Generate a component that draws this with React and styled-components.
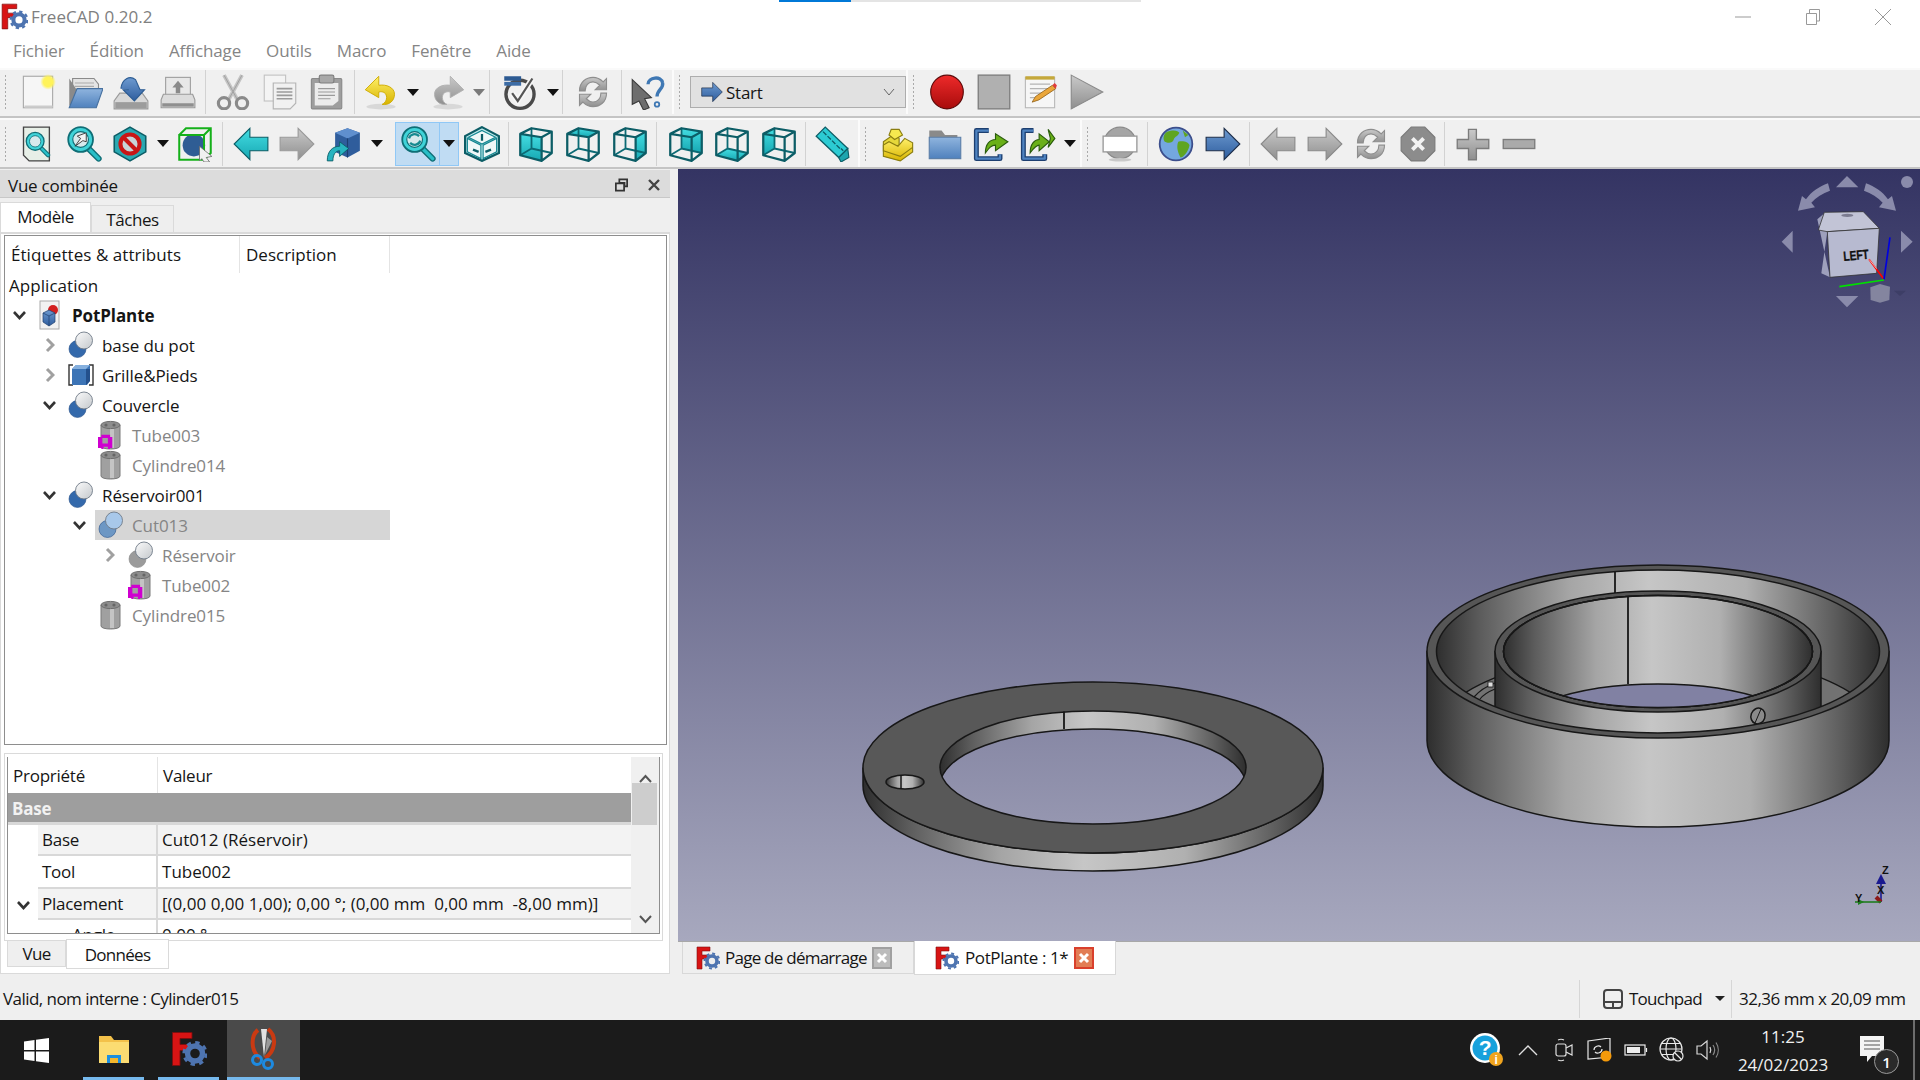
import React from 'react';
import styled, { createGlobalStyle } from 'styled-components';

const GlobalStyle = createGlobalStyle`
    html, body {
        margin: 0;
        padding: 0;
        background: #efefef;
    }
    * {
        box-sizing: border-box;
    }
`;

const FONT = `"Open Sans", "Noto Sans", "Liberation Sans", sans-serif`;

const Page = styled.div`
    width: 1920px;
    height: 1080px;
    overflow: hidden;
    display: flex;
    flex-direction: column;
    font-family: ${FONT};
    font-size: 17px;
    letter-spacing: -0.25px;
    color: #151515;
    background: #efefef;
`;

const TitleBar = styled.div`
    position: relative;
    height: 33px;
    flex: none;
    background: #fff;
    display: flex;
    align-items: center;
    padding-left: 1px;
    color: #808080;
`;

const TitleText = styled.span`
    margin-left: 3px;
    letter-spacing: 0.05px;
`;

const LoadBar = styled.div`
    position: absolute;
    top: 0;
    left: 779px;
    width: 362px;
    height: 2px;
    background: linear-gradient(90deg, #0078d7 0 72px, #e4e4e4 72px);
`;

const WindowButtons = styled.div`
    margin-left: auto;
    display: flex;
    align-items: center;
    height: 33px;
    margin-right: 2px;
`;

const WindowButton = styled.div`
    width: 70px;
    height: 33px;
    display: flex;
    align-items: center;
    justify-content: center;
`;

const MenuBar = styled.div`
    height: 35px;
    flex: none;
    background: #fff;
    display: flex;
    align-items: center;
    gap: 25px;
    padding: 0 0 1px 13px;
    color: #858585;
    letter-spacing: -0.12px;
`;

const ToolRow = styled.div`
    height: ${p => p.$h}px;
    flex: none;
    background: #f0f0f0;
    display: flex;
    border-top: 2px solid #fafafa;
    border-bottom: 2px solid #c4c4c4;
    padding-bottom: ${p => p.$pb || 0}px;
`;

const ToolGroup = styled.div`
    ${p => (p.$w ? `width: ${p.$w}px; flex: none; border-right: 2px solid #fbfbfb;` : 'flex: 1;')}
    display: flex;
    align-items: center;
    position: relative;
`;

const Grip = styled.div`
    width: 3px;
    height: 36px;
    margin: 0 ${p => p.$gap}px 0 4px;
    flex: none;
    background-image: radial-gradient(#aaa 1px, transparent 1px);
    background-size: 3px 4px;
`;

const ToolButton = styled.div`
    width: ${p => p.$w || 46.5}px;
    margin-left: ${p => p.$ml || 0}px;
    height: 44px;
    flex: none;
    display: flex;
    align-items: center;
    justify-content: center;
    ${p => p.$on && `background: #c0dcf3; border: 1px solid #90c8f6;`}
`;

const DropArrow = styled.div`
    width: ${p => p.$w || 20}px;
    height: 44px;
    flex: none;
    display: flex;
    align-items: center;
    justify-content: center;
    ${p => p.$on && `background: #c0dcf3; border: 1px solid #90c8f6; border-left: none;`}

    &::after {
        content: '';
        border-left: 6px solid transparent;
        border-right: 6px solid transparent;
        border-top: 7px solid ${p => (p.$off ? '#7a7a7a' : '#111')};
    }
`;

const ToolSep = styled.div`
    width: 1px;
    height: 44px;
    flex: none;
    background: #d2d2d2;
    margin: 0 ${p => p.$gap ?? 4}px;
`;

const Combo = styled.div`
    width: 216px;
    height: 32px;
    flex: none;
    margin-left: 2px;
    background: #e1e1e1;
    border: 1px solid #adadad;
    display: flex;
    align-items: center;
    padding: 0 10px;
    gap: 3px;
`;

const ComboChevron = styled.div`
    margin-left: auto;
    display: flex;
`;

const Main = styled.div`
    flex: 1;
    display: flex;
    min-height: 0;
`;

const Dock = styled.div`
    width: 678px;
    flex: none;
    padding: 1px 8px 0 0;
    display: flex;
    flex-direction: column;
`;

const DockTitle = styled.div`
    height: 28px;
    flex: none;
    background: #dcdcdc;
    border-bottom: 1px solid #c8c8c8;
    display: flex;
    align-items: center;
    padding: 3px 9px 0 8px;
`;

const DockButtons = styled.div`
    margin-left: auto;
    display: flex;
    align-items: center;
    gap: 19px;
`;

const TopTabs = styled.div`
    height: 34px;
    flex: none;
    display: flex;
    align-items: flex-end;
    letter-spacing: -0.45px;
`;

const TopTab = styled.div`
    height: ${p => (p.$on ? 30 : 27)}px;
    width: ${p => p.$w}px;
    background: ${p => (p.$on ? '#fff' : '#eee')};
    border: 1px solid #dadada;
    border-bottom: none;
    display: flex;
    align-items: center;
    justify-content: center;
    padding-bottom: ${p => (p.$on ? 2 : 0)}px;
`;

const TabPane = styled.div`
    flex: 1;
    background: #fff;
    border: 1px solid #dadada;
    border-top: 2px solid #dadada;
    padding: 1px 0 0 3px;
    display: flex;
    flex-direction: column;
    min-height: 0;
`;

const TreeBox = styled.div`
    width: 663px;
    height: 510px;
    flex: none;
    border: 1px solid #8e8e8e;
    background: #fff;
    overflow: hidden;
    letter-spacing: -0.1px;
`;

const TreeHeader = styled.div`
    height: 35px;
    display: flex;
`;

const TreeHeaderCell = styled.div`
    width: ${p => p.$w}px;
    border-right: 1px solid #e4e4e4;
    display: flex;
    align-items: center;
    padding-left: ${p => p.$pad}px;
    padding-right: 2px;
    height: 37px;
    letter-spacing: ${p => p.$ls || 0}px;
`;

const TreeRoot = styled.div`
    height: 29px;
    display: flex;
    align-items: center;
    padding-left: 4px;
    letter-spacing: 0.05px;
`;

const TreeRow = styled.div`
    width: 385px;
    height: 30px;
    display: flex;
    align-items: stretch;
    padding-left: ${p => p.$level * 30 + 1}px;
`;

const Twisty = styled.div`
    width: 29px;
    flex: none;
    display: flex;
    align-items: center;
    justify-content: center;
    padding-right: 2px;
`;

const TreeBody = styled.div`
    flex: 1;
    display: flex;
    align-items: center;
    gap: ${p => (p.$bold ? 10 : 8)}px;
    padding-left: 3px;
    background: ${p => (p.$selected ? '#d6d6d6' : 'transparent')};
    color: ${p => (p.$muted ? '#858585' : '#151515')};
    font-weight: ${p => (p.$bold ? 700 : 400)};
`;

const PropBox = styled.div`
    width: 659px;
    height: 188px;
    margin-top: 8px;
    flex: none;
    border: 1px solid #dadada;
    padding: 3px 2px 6px 2px;
`;

const PropFrame = styled.div`
    height: 100%;
    border: 1px solid #8e8e8e;
    border-top: none;
    display: flex;
    overflow: hidden;
`;

const PropTable = styled.div`
    flex: 1;
    overflow: hidden;
`;

const PropHeader = styled.div`
    height: 36px;
    display: flex;
    align-items: center;
`;

const PropHeaderCell = styled.div`
    width: ${p => p.$w}px;
    height: 36px;
    display: flex;
    align-items: center;
    padding-left: ${p => p.$pad}px;
    ${p => p.$border && 'border-right: 1px solid #e4e4e4;'}
`;

const PropGroup = styled.div`
    height: 32px;
    background: #9e9e9e;
    border-bottom: 3px solid #d8d8d8;
    color: #f2f2f2;
    font-weight: 700;
    display: flex;
    align-items: center;
    padding: 1px 0 0 4px;
`;

const PropRow = styled.div`
    height: ${p => p.$h || 31}px;
    display: flex;
    background: #fff;
`;

const PropExpander = styled.div`
    width: 30px;
    flex: none;
    display: flex;
    align-items: center;
    justify-content: center;
`;

const PropName = styled.div`
    width: 120px;
    flex: none;
    background: ${p => (p.$alt ? '#f3f3f3' : '#fff')};
    border-bottom: 2px solid #d8d8d8;
    border-right: 2px solid #d8d8d8;
    display: flex;
    align-items: center;
    padding-left: ${p => p.$indent || 4}px;
`;

const PropValue = styled.div`
    flex: 1;
    background: ${p => (p.$alt ? '#f3f3f3' : '#fff')};
    border-bottom: 2px solid #d8d8d8;
    display: flex;
    align-items: center;
    padding-left: 4px;
    white-space: pre;
    letter-spacing: 0.02px;
`;

const ScrollBar = styled.div`
    width: 28px;
    flex: none;
    background: #f0f0f0;
    display: flex;
    flex-direction: column;
    align-items: center;
    justify-content: space-between;
    padding-top: 8px;
    position: relative;
`;

const ScrollThumb = styled.div`
    position: absolute;
    top: 26px;
    left: 1px;
    right: 2px;
    height: 42px;
    background: #cdcdcd;
`;

const ScrollArrow = styled.div`
    height: 27px;
    display: flex;
    align-items: center;
`;

const BottomTabs = styled.div`
    display: flex;
    padding-left: 3px;
    height: 30px;
    margin-top: -2px;
    letter-spacing: -0.7px;
`;

const BottomTab = styled.div`
    width: ${p => p.$w}px;
    height: ${p => (p.$on ? 30 : 26)}px;
    background: ${p => (p.$on ? '#fff' : '#efefef')};
    margin-top: ${p => (p.$on ? 0 : 2)}px;
    border: 1px solid #dadada;
    border-top: ${p => (p.$on ? '1px solid #dadada' : 'none')};
    display: flex;
    align-items: center;
    justify-content: center;
`;

const Viewport = styled.div`
    flex: 1;
    display: flex;
    flex-direction: column;
`;

const Canvas = styled.div`
    position: relative;
    height: 772px;
    flex: none;
    background: linear-gradient(#343463, #a7a8be);
`;

const Scene = styled.svg`
    position: absolute;
    inset: 0;
    display: block;
`;

const DocTabs = styled.div`
    flex: 1;
    display: flex;
    align-items: flex-start;
    border-top: 1px solid #a8a8a8;
    padding-left: 4px;
`;

const DocTab = styled.div`
    height: ${p => (p.$on ? 34 : 32)}px;
    width: ${p => p.$w}px;
    margin-top: ${p => (p.$on ? -1 : 0)}px;
    background: ${p => (p.$on ? '#fff' : '#efefef')};
    border: 1px solid #d8d8d8;
    border-top: none;
    display: flex;
    align-items: center;
    padding-left: ${p => p.$pad}px;
    gap: ${p => (p.$on ? 6 : 5)}px;
    letter-spacing: ${p => (p.$on ? -0.4 : -0.75)}px;
`;

const StatusBar = styled.div`
    height: 46px;
    flex: none;
    display: flex;
    align-items: center;
    padding: 3px 0 0 3px;
    letter-spacing: -0.55px;
`;

const StatusRight = styled.div`
    margin-left: auto;
    height: 38px;
    display: flex;
    align-items: center;
`;

const TouchPad = styled.div`
    width: 153px;
    height: 38px;
    border-left: 1px solid #d6d6d6;
    border-right: 1px solid #d6d6d6;
    display: flex;
    align-items: center;
    padding-left: 23px;
    gap: 6px;
    letter-spacing: -0.75px;
`;

const TouchArrow = styled.div`
    margin-left: 7px;
    border-left: 5px solid transparent;
    border-right: 5px solid transparent;
    border-top: 5px solid #222;
`;

const Dimensions = styled.div`
    width: 188px;
    padding-left: 7px;
    white-space: pre;
    letter-spacing: -0.5px;
`;

const TaskBar = styled.div`
    height: 60px;
    flex: none;
    background: #1b1b1b;
    color: #f0f0f0;
    display: flex;
    align-items: stretch;
`;

const StartBtn = styled.div`
    width: 72px;
    margin-right: 11px;
    display: flex;
    align-items: center;
    justify-content: center;
`;

const TaskItem = styled.div`
    width: ${p => p.$w}px;
    margin-right: ${p => p.$mr || 0}px;
    background: ${p => (p.$on ? '#4a4a4a' : 'transparent')};
    display: flex;
    align-items: center;
    justify-content: center;
    border-bottom: 3px solid #76b9ed;
`;

const Tray = styled.div`
    margin-left: auto;
    display: flex;
    align-items: center;
    padding-right: 14px;
`;

const TrayIcon = styled.div`
    width: ${p => p.$w || 36}px;
    display: flex;
    align-items: center;
    justify-content: center;
`;

const Clock = styled.div`
    width: 110px;
    margin-left: 2px;
    text-align: center;
    line-height: 28px;
    font-size: 17px;
    letter-spacing: 0;
    padding-top: 2px;
`;

const Note = styled.div`
    position: relative;
    width: 52px;
    margin-left: 9px;
    display: flex;
    justify-content: center;
`;

const NoteBadge = styled.div`
    position: absolute;
    top: 13px;
    left: 27px;
    width: 25px;
    height: 25px;
    border-radius: 50%;
    border: 1px solid #9a9a9a;
    background: #2a2a2a;
    color: #fff;
    font-size: 15px;
    font-weight: 600;
    display: flex;
    align-items: center;
    justify-content: center;
`;

const DesktopEdge = styled.div`
    width: 2px;
    background: #6d6d6d;
    margin-right: 5px;
`;

// ---- drawings ----

const Ico = ({ children, w = 36, h = 36, box = '0 0 32 32' }) => (
    <svg width={w} height={h} viewBox={box} style={{ display: 'block', flex: 'none' }}>{children}</svg>
);

const Gradients = () => (
    <svg width="0" height="0" style={{ position: 'absolute' }}>
        <defs>
            <linearGradient id="wall">
                <stop offset="0" stopColor="#2e2e2e" />
                <stop offset=".1" stopColor="#5c5c5c" />
                <stop offset=".3" stopColor="#a5a5a5" />
                <stop offset=".48" stopColor="#c6c6c6" />
                <stop offset=".7" stopColor="#b0b0b0" />
                <stop offset=".9" stopColor="#5c5c5c" />
                <stop offset="1" stopColor="#2e2e2e" />
            </linearGradient>
            <linearGradient id="teal" x1="0" y1="0" x2="0" y2="1">
                <stop offset="0" stopColor="#44dde2" />
                <stop offset="1" stopColor="#16a7b2" />
            </linearGradient>
            <linearGradient id="blue" x1="0" y1="0" x2="0" y2="1">
                <stop offset="0" stopColor="#6d9ad0" />
                <stop offset="1" stopColor="#2e5d9e" />
            </linearGradient>
            <linearGradient id="grey" x1="0" y1="0" x2="0" y2="1">
                <stop offset="0" stopColor="#c9c9c9" />
                <stop offset="1" stopColor="#8f8f8f" />
            </linearGradient>
            <linearGradient id="yellow" x1="0" y1="0" x2="0" y2="1">
                <stop offset="0" stopColor="#fff06a" />
                <stop offset="1" stopColor="#d8b400" />
            </linearGradient>
            <linearGradient id="folder" x1="0" y1="0" x2="0" y2="1">
                <stop offset="0" stopColor="#8fb4de" />
                <stop offset="1" stopColor="#4f81bd" />
            </linearGradient>
            <linearGradient id="red" x1="0" y1="0" x2="0" y2="1">
                <stop offset="0" stopColor="#ee2a2a" />
                <stop offset="1" stopColor="#a80c0c" />
            </linearGradient>
            <linearGradient id="ball" x1="0" y1="0" x2="1" y2="1">
                <stop offset="0" stopColor="#fbfbfb" />
                <stop offset="1" stopColor="#c4c8cc" />
            </linearGradient>
            <radialGradient id="glow">
                <stop offset="0" stopColor="#fff35a" />
                <stop offset=".6" stopColor="#fff35a" />
                <stop offset="1" stopColor="#fff35a" stopOpacity="0" />
            </radialGradient>
        </defs>
    </svg>
);

const Logo = ({ w = 24, h = 24 }) => (
    <svg width={w} height={h} viewBox="0 0 24 24" style={{ display: 'block', flex: 'none' }}>
        <path d="M1 1H14V5H6V9H12V13H6V23H1Z" fill="#d81414" stroke="#7c0d0d" strokeWidth=".6" />
        <circle cx="16" cy="15" r="5" fill="none" stroke="#4e74b0" strokeWidth="3.6" />
        <circle cx="16" cy="15" r="7.4" fill="none" stroke="#4e74b0" strokeWidth="2" strokeDasharray="2.9 2.9" />
    </svg>
);

const IconNew = () => (
    <Ico>
        <rect x="3" y="2" width="26" height="28" fill="#f6f6f6" stroke="#a8a8a8" />
        <path d="M4 30H29V28H4Z" fill="#ccc" />
        <circle cx="25" cy="7" r="7" fill="url(#glow)" />
    </Ico>
);

const IconOpen = () => (
    <Ico>
        <path d="M5 4H24L28 9V18H5Z" fill="#e4e4e4" stroke="#8a8a8a" />
        <path d="M7 8H24M7 11H24" stroke="#aaa" />
        <path d="M2 4V28H8L12 13H8Z" fill="#8a8a8a" />
        <path d="M9 13H32L26 30H2Z" fill="url(#folder)" stroke="#46709f" />
    </Ico>
);

const IconSave = () => (
    <Ico>
        <path d="M6 17 1 24V31H31V24L26 17Z" fill="#d8d8d8" stroke="#9a9a9a" />
        <rect x="2" y="25" width="28" height="5.5" fill="#9c9c9c" />
        <path d="M7 13C8 4 15 1 20 5L24 14H28L19 24 9 14H14" fill="url(#blue)" stroke="#2c5c93" />
    </Ico>
);

const IconSaveAs = () => (
    <Ico>
        <rect x="5" y="3" width="22" height="17" fill="#e8e8e8" stroke="#a0a0a0" />
        <path d="M16 6 21 12H18V17H14V12H11Z" fill="#8a8a8a" />
        <path d="M3 18H29L31 23V30H1V23Z" fill="#dcdcdc" stroke="#9a9a9a" />
        <rect x="2" y="26" width="28" height="3" fill="#8f8f8f" />
    </Ico>
);

const IconCut = () => (
    <Ico>
        <path d="M8 1 20 23M24 1 12 23" stroke="#c4c4c4" strokeWidth="3.4" />
        <path d="M8 1 20 23M24 1 12 23" stroke="#9d9d9d" strokeWidth=".8" fill="none" />
        <circle cx="8" cy="26" r="5" fill="none" stroke="#8a8a8a" strokeWidth="2.8" />
        <circle cx="24" cy="26" r="5" fill="none" stroke="#8a8a8a" strokeWidth="2.8" />
    </Ico>
);

const IconCopy = () => (
    <Ico>
        <rect x="2" y="1" width="19" height="23" fill="#f4f4f4" stroke="#c2c2c2" />
        <path d="M10 8H30V26L25 31H10Z" fill="#f1f1f1" stroke="#b4b4b4" />
        <path d="M13 13H27M13 16H27M13 19H27M13 22H27" stroke="#9a9a9a" strokeWidth="1.4" />
    </Ico>
);

const IconPaste = () => (
    <Ico>
        <rect x="3" y="4" width="27" height="27" rx="1" fill="#9e9e9e" stroke="#8a8a8a" />
        <path d="M6 8H27V24L22 28H6Z" fill="#ececec" />
        <rect x="10" y="1" width="13" height="7" rx="1.5" fill="#a8a8a8" stroke="#7e7e7e" />
        <path d="M9 13H24M9 16H24M9 19H24M9 22H20" stroke="#9a9a9a" />
    </Ico>
);

const IconTurn = ({ flip, off }) => (
    <Ico>
        <ellipse cx="16" cy="29" rx="13" ry="2.5" fill="#c8c8c8" opacity=".6" />
        <g transform={flip ? 'translate(32 0) scale(-1 1)' : undefined}>
            <path
                d="M14 2 2 14 14 21V16C18 15 21 17 21 21 21 24 19 26 17 27 23 28 28 24 28 18 28 12 21 9 14 10Z"
                fill={off ? 'url(#grey)' : 'url(#yellow)'}
                stroke={off ? '#b0b0b0' : '#cda900'}
                strokeWidth=".8"
            />
        </g>
    </Ico>
);

const IconCheck = () => (
    <Ico>
        <circle cx="16" cy="18" r="12.5" fill="#f0f0f0" stroke="#4a4a4a" strokeWidth="3" />
        <path d="M9 17 14 24 27 4" fill="none" stroke="#f6f6f6" strokeWidth="5" />
        <path d="M9 17 14 24 27 4" fill="none" stroke="#555" strokeWidth="2" />
        <rect x="2" y="2" width="15" height="4" fill="#2c5a92" />
        <rect x="2" y="7" width="15" height="3.4" fill="#3c6ca5" />
    </Ico>
);

const IconRefresh = ({ fill = 'url(#grey)', line = '#8e8e8e' }) => (
    <Ico>
        <path d="M4 15C4 7 10 3 16 3 20 3 23 5 25 7L28 4V14H18L22 10C20 8 18 7 16 7 12 7 9 10 9 15Z" fill={fill} stroke={line} />
        <path d="M28 17C28 25 22 29 16 29 12 29 9 27 7 25L4 28V18H14L10 22C12 24 14 25 16 25 20 25 23 22 23 17Z" fill={fill} stroke={line} />
    </Ico>
);

const IconWhat = () => (
    <Ico>
        <path d="M2 5 19 21 13 22 17 30 12 32 8 24 2 27Z" fill="#6e6e6e" stroke="#3b3b3b" />
        <path d="M16 9C16 3 28 1 29 8 30 13 24 14 24 20" fill="none" stroke="#3f78b4" strokeWidth="3" />
        <circle cx="24" cy="27" r="2" fill="none" stroke="#3f78b4" strokeWidth="1.6" />
    </Ico>
);

const IconArrow = ({ left, fill = 'url(#blue)', line = '#1f2f4a', w = 36, h = 36 }) => (
    <Ico w={w} h={h}>
        <g transform={left ? 'translate(32 0) scale(-1 1)' : undefined}>
            <path d="M1 10H17V2L31 16 17 30V22H1Z" fill={fill} stroke={line} strokeWidth="1" />
        </g>
    </Ico>
);

const IconRecord = () => (
    <Ico>
        <ellipse cx="16" cy="16" rx="14.5" ry="15" fill="url(#red)" stroke="#5c0a0a" />
    </Ico>
);

const IconStop = () => (
    <Ico>
        <rect x="2" y="1" width="28" height="30" fill="#b0b0b0" stroke="#7e7e7e" strokeWidth="1.2" />
    </Ico>
);

const IconMacro = () => (
    <Ico>
        <rect x="3" y="3" width="26" height="27" fill="#f6f6f6" stroke="#b8b8b8" />
        <rect x="3" y="2" width="26" height="3" fill="#c5a83a" />
        <path d="M7 9H25M7 13H25M7 17H18M7 21H14" stroke="#b4b4b4" />
        <path d="M9 25 12 20 27 10 30 13 15 23Z" fill="#eaa63a" stroke="#8d5f19" strokeWidth=".7" />
        <path d="M27 10 30 13 31 10 29 8Z" fill="#e03c3c" />
    </Ico>
);

const IconPlay = () => (
    <Ico>
        <path d="M2 1 30 16 2 31Z" fill="url(#grey)" stroke="#8a8a8a" />
    </Ico>
);

const Lens = ({ children, line = '#0f6e76' }) => (
    <g>
        <path d="M20 20 29 29" stroke={line} strokeWidth="5.4" strokeLinecap="round" />
        <path d="M20 20 29 29" stroke="#28bfc7" strokeWidth="3" strokeLinecap="round" />
        <circle cx="13" cy="12" r="11" fill="#40d3d8" stroke={line} strokeWidth="1.6" />
        <circle cx="13" cy="12" r="7" fill="#d7e9ec" stroke={line} strokeWidth="1" />
        {children}
    </g>
);

const IconFitAll = () => (
    <Ico>
        <path d="M4 1H27V31H9L4 26Z" fill="#e7efe7" stroke="#444" strokeWidth="1.2" />
        <g transform="translate(5 5) scale(.72)"><Lens /></g>
    </Ico>
);

const IconFitSel = () => (
    <Ico>
        <Lens />
        <path d="M8 18 13 11 10 9 18 6 18 14 15 13Z" fill="#f4f4f4" stroke="#333" strokeWidth=".8" />
    </Ico>
);

const IconDrawStyle = () => (
    <Ico>
        <path d="M16 1 30 9V23L16 31 2 23V9Z" fill="#2aa9b2" stroke="#0c5d66" strokeWidth="1.4" />
        <circle cx="16" cy="16" r="8.5" fill="#c8d4d8" stroke="#c91616" strokeWidth="3.6" />
        <path d="M10 10 22 22" stroke="#c91616" strokeWidth="3.6" />
    </Ico>
);

const IconBox = () => (
    <Ico>
        <circle cx="15" cy="17" r="10" fill="#2f5d94" />
        <path d="M2 8H24V30H2Z M2 8 8 2H30V24L24 30 M24 8 30 2" fill="none" stroke="#15b01a" strokeWidth="1.8" />
        <path d="M20 18 31 27 26 28 29 32 24 32 22 29 20 31Z" fill="#f0f0f0" stroke="#666" strokeWidth=".7" />
    </Ico>
);

const IconSyncCube = () => (
    <Ico>
        <path d="M9 6 20 2 31 6V22L20 28 9 23Z" fill="#2f5d9c" />
        <path d="M9 6 20 11 31 6 20 2Z" fill="#5f8fce" />
        <path d="M20 11V28" stroke="#1d3f70" />
        <path d="M2 31C2 22 7 18 13 18V14L21 20 13 27V22C9 22 7 26 7 31Z" fill="#28b4c0" stroke="#0c5d66" strokeWidth=".8" />
    </Ico>
);

const IconSyncView = () => (
    <Ico>
        <Lens />
        <path d="M8 11C9 7 14 6 17 9M18 13C17 17 12 18 9 15" fill="none" stroke="#178a90" strokeWidth="2" />
    </Ico>
);

const FACES = {
    front: '2,7 21,10 21,31 2,26',
    top: '2,7 12,2 30,5 21,10',
    right: '21,10 30,5 30,24 21,31',
    rear: '12,2 30,5 30,24 12,20',
    bottom: '2,26 12,20 30,24 21,31',
    left: '2,7 12,2 12,20 2,26',
};

const IconCube = ({ face }) => (
    <Ico>
        {face && <polygon points={FACES[face]} fill="url(#teal)" />}
        <path d="M12 2V20M12 20 2 26M12 20 30 24" stroke="#0c6a74" strokeWidth="1.6" fill="none" />
        <path d="M2 7 12 2 30 5 30 24 21 31 2 26ZM2 7 21 10 30 5M21 10V31" stroke="#0c5d66" strokeWidth="2" fill="none" strokeLinejoin="round" />
    </Ico>
);

const IconIso = () => (
    <Ico>
        <path d="M16 1 31 9V24L16 31 1 24V9Z" fill="#bfeaec" stroke="#0c5d66" strokeWidth="2" />
        <path d="M16 4 28 10 16 16 4 10Z M3 11 15 17V29L3 23Z M29 11 17 17V29L29 23Z" fill="#eef7f7" stroke="#138590" strokeWidth="1" />
        <path d="M16 7V13M8 21 13 23M24 21 19 23" stroke="#0c5d66" strokeWidth="2" />
    </Ico>
);

const IconRuler = () => (
    <Ico>
        <path d="M2 9 10 1 30 20 22 28Z" fill="#2ccbd3" stroke="#0c5d66" strokeWidth="1.2" />
        <path d="M30 20 31 28 24 32 22 28Z" fill="#1da5ae" stroke="#0c5d66" />
        <path d="M8 5 11 8M12 9 15 12M16 13 19 16M20 17 23 20M24 20 26 22" stroke="#0c5d66" strokeWidth="1.2" />
    </Ico>
);

const IconPart = () => (
    <Ico>
        <path d="M3 14 13 7 17 11V17L3 22Z" fill="#e6d83a" stroke="#8a7d10" />
        <path d="M10 3 17 3 20 8 13 12 8 8Z" fill="#f6e94f" stroke="#8a7d10" />
        <path d="M3 17 3 27 18 31 29 23V15L22 11 16 18 8 14Z" fill="url(#yellow)" stroke="#8a7d10" />
        <path d="M3 22 18 27 29 19" fill="none" stroke="#8a7d10" />
    </Ico>
);

const IconFolder = () => (
    <Ico>
        <path d="M2 4H13L16 8H27V14H2Z" fill="#8a8a8a" />
        <path d="M2 10H30V29H2Z" fill="url(#folder)" stroke="#5c7fa8" />
    </Ico>
);

const IconLink = () => (
    <Ico>
        <path d="M24 25V29H3V4H14" fill="none" stroke="#1d3f70" strokeWidth="4.4" strokeLinejoin="round" />
        <path d="M24 25V29H3V4H14" fill="none" stroke="#4f83c0" strokeWidth="2" strokeLinejoin="round" />
        <path d="M11 24C11 16 15 12 20 12V7L31 14 20 22V17C16 17 14 20 11 24Z" fill="#6ab018" stroke="#2a5c0c" />
    </Ico>
);

const IconLink2 = () => (
    <Ico>
        <path d="M22 25V29H3V4H12" fill="none" stroke="#1d3f70" strokeWidth="4.4" strokeLinejoin="round" />
        <path d="M22 25V29H3V4H12" fill="none" stroke="#4f83c0" strokeWidth="2" strokeLinejoin="round" />
        <path d="M9 24C9 16 13 12 17 12V7L26 14 17 22V17C14 17 12 20 9 24Z" fill="#6ab018" stroke="#2a5c0c" />
        <path d="M25 3 31 11 25 19 27 11Z" fill="#6ab018" stroke="#2a5c0c" />
    </Ico>
);

const IconWeb = () => (
    <Ico>
        <circle cx="16" cy="15" r="14" fill="#a5a5a5" stroke="#8a8a8a" />
        <rect x="1" y="9" width="30" height="14" fill="#fff" stroke="#9a9a9a" strokeWidth="1.2" />
        <ellipse cx="16" cy="30" rx="10" ry="1.6" fill="#c9c9c9" />
    </Ico>
);

const IconGlobe = () => (
    <Ico>
        <circle cx="16" cy="16" r="14.5" fill="#74a7df" stroke="#3c4e8c" strokeWidth="1.6" />
        <path d="M8 5C14 3 18 4 19 6 17 10 15 9 14 12 13 16 8 15 6 14 4 11 5 7 8 5ZM18 14C22 13 27 14 28 17 27 23 22 28 20 28 18 24 16 19 18 14ZM22 4 27 8 24 10Z" fill="#5fa521" />
    </Ico>
);

const IconStopOct = () => (
    <Ico>
        <path d="M10 1H22L31 10V22L22 31H10L1 22V10Z" fill="#8c8c8c" stroke="#7a7a7a" />
        <path d="M11 11 21 21M21 11 11 21" stroke="#f2f2f2" strokeWidth="3.4" />
    </Ico>
);

const IconPlus = () => (
    <Ico>
        <path d="M12 3H19V12H30V20H19V30H12V20H2V12H12Z" fill="url(#grey)" stroke="#7c7c7c" strokeWidth="1.2" />
    </Ico>
);

const IconMinus = () => (
    <Ico>
        <rect x="2" y="12" width="28" height="8" fill="#aaa" stroke="#7c7c7c" strokeWidth="1.2" />
    </Ico>
);

const Down = ({ color = '#333' }) => (
    <svg width="15" height="10" viewBox="0 0 15 10"><path d="M2 2 7.5 8 13 2" fill="none" stroke={color} strokeWidth="2.6" /></svg>
);
const Right = () => (
    <svg width="10" height="16" viewBox="0 0 10 16"><path d="M2 2 8 8 2 14" fill="none" stroke="#a0a0a0" strokeWidth="3" /></svg>
);

const TreeDoc = () => (
    <Ico w={24} h={30} box="0 0 24 30">
        <rect x="2" y="1" width="19" height="28" fill="#f2f2f2" stroke="#aaa" />
        <circle cx="15" cy="10" r="5" fill="#d32020" />
        <path d="M5 13 11 10 17 13V22L11 26 5 22Z" fill="url(#blue)" stroke="#1f3f6d" strokeWidth=".7" />
        <path d="M5 13 11 16 17 13M11 16V26" stroke="#1f3f6d" strokeWidth=".7" fill="none" />
    </Ico>
);

const TreeCompound = ({ grey, pale }) => {
    const front = grey ? '#9b9b9b' : pale ? '#6d97c4' : '#3469ab';
    return (
        <Ico w={26} h={28} box="0 0 26 28">
            <circle cx="9.5" cy="18" r="8.5" fill={front} stroke={grey ? '#888' : '#27518a'} strokeWidth=".6" />
            <circle cx="16" cy="9.5" r="8.5" fill={pale ? '#a8c8ea' : 'url(#ball)'} stroke="#6f7b88" strokeWidth=".9" />
        </Ico>
    );
};

const TreeBox3d = () => (
    <Ico w={26} h={28} box="0 0 26 28">
        <path d="M5 4H1V24H5M21 4H25V24H21" fill="none" stroke="#333" strokeWidth="1.4" />
        <path d="M4 8 8 4H22V20L19 24H4Z" fill="#3c74b6" />
        <path d="M4 8 8 4H22L18 8Z" fill="#86b0de" />
        <path d="M18 8H22V20L18 24Z" fill="#24508c" />
    </Ico>
);

const TreeCyl = ({ badge }) => (
    <Ico w={26} h={30} box="0 0 26 30">
        <path d="M3 5V26C3 30 22 30 22 26V5Z" fill="#a0a0a0" stroke="#7a7a7a" />
        <path d="M14 7V28" stroke="#c4c4c4" strokeWidth="4" />
        <ellipse cx="12.5" cy="5" rx="9.5" ry="3.6" fill="#8d8d8d" stroke="#6e6e6e" />
        <circle cx="8" cy="5" r="1.6" fill="#666" />
        <circle cx="16" cy="5" r="1.6" fill="#666" />
        {badge && (
            <g transform="translate(0 -4) scale(1.1)">
                <path d="M3 17H11V19H13V29H11V30H9V28H5V30H3V29H0V19H3Z M4 20V25H9V20Z" fill="#cf00cf" fillRule="evenodd" />
            </g>
        )}
    </Ico>
);

const ell = (cx, cy, rx, ry) =>
    `M${cx - rx} ${cy}A${rx} ${ry} 0 1 0 ${cx + rx} ${cy}A${rx} ${ry} 0 1 0 ${cx - rx} ${cy}Z`;

const Flat = () => (
    <g stroke="#171717" strokeWidth="1.5">
        <mask id="hole1" maskUnits="userSpaceOnUse" x="850" y="670" width="500" height="220">
            <path d={ell(1093, 767.5, 153, 56.5)} fill="#fff" stroke="none" />
            <path d={ell(1093, 785.5, 153, 56.5)} fill="#000" stroke="none" />
        </mask>
        <path d="M863 767.5V785.5A230 85.5 0 0 0 1323 785.5V767.5A230 85.5 0 0 1 863 767.5Z" fill="url(#wall)" />
        <path d={ell(1093, 767.5, 153, 56.5)} fill="url(#wall)" stroke="none" mask="url(#hole1)" />
        <clipPath id="hole1Clip"><path d={ell(1093, 767.5, 153, 56.5)} /></clipPath>
        <path d={ell(1093, 785.5, 153, 56.5)} fill="none" clipPath="url(#hole1Clip)" />
        <path d={ell(1093, 767.5, 230, 85.5) + ell(1093, 767.5, 153, 56.5)} fill="#585858" fillRule="evenodd" />
        <path d="M1064 711.5V729" strokeWidth="1.8" />
        <ellipse cx="905" cy="782" rx="19" ry="7" fill="url(#wall)" />
        <path d="M901 775V789" />
    </g>
);

const Pot = () => (
    <g stroke="#171717" strokeWidth="1.5">
        <clipPath id="potInner"><path d={ell(1658, 651.5, 221.5, 81.5)} /></clipPath>
        <clipPath id="tubeInner"><path d={ell(1658, 651.5, 154.5, 56)} /></clipPath>
        <path d="M1427 651.5V740.5A231 86.5 0 0 0 1889 740.5V651.5Z" fill="url(#wall)" />
        <g clipPath="url(#potInner)">
            <rect x="1436" y="565" width="443" height="175" fill="url(#wall)" stroke="none" />
            <path d={ell(1658, 733, 221.5, 81.5)} fill="#727272" />
            <path d="M1474 697C1480 690 1487 686 1495 683M1480 699C1484 694 1490 691 1495 689" fill="none" strokeWidth="1.2" />
            <rect x="1488" y="682" width="5" height="5" fill="#ddd" strokeWidth=".8" />
            <path d="M1495 651.5V800H1821V651.5Z" fill="url(#wall)" />
            <path d={ell(1658, 651.5, 163, 60.5) + ell(1658, 651.5, 154.5, 56)} fill="#555" fillRule="evenodd" />
            <path d={ell(1658, 651.5, 154.5, 56)} fill="url(#wall)" />
            <g clipPath="url(#tubeInner)">
                <path d={ell(1658, 740, 154.5, 56)} fill="#8181a3" />
            </g>
            <path d={ell(1658, 651.5, 154.5, 56)} fill="none" />
            <path d="M1628 597V684" strokeWidth="1.8" />
            <path d="M1615 570V593" strokeWidth="1.8" />
            <ellipse cx="1758" cy="716" rx="7" ry="8" transform="rotate(20 1758 716)" fill="#8a8a8a" />
            <path d="M1761 709 1755 723" strokeWidth="1" />
        </g>
        <path d={ell(1658, 651.5, 231, 86.5) + ell(1658, 651.5, 221.5, 81.5)} fill="#565656" fillRule="evenodd" />
    </g>
);

const NavCube = () => (
    <g transform="translate(1760 160) scale(.3333)">
        <g fill="#8a8bab">
            <path d="M261 48 228 82H295ZM65 245 98 212V278ZM458 245 423 212V278ZM228 408H295L261 442Z" />
            <circle cx="441" cy="66" r="18" />
            <path d="M204 70 210 92C188 100 168 112 154 128L165 142 114 152 126 108 138 118C155 94 178 80 204 70Z" />
            <path d="M318 70 312 92C334 100 354 112 368 128L357 142 408 152 396 108 384 118C367 94 344 80 318 70Z" />
        </g>
        <path d="M172 178 193 160 202 215 184 340 210 352Z" fill="#9ea0bc" />
        <path d="M175 210 193 157 310 155 358 205 202 215Z" fill="#c2c4d6" stroke="#333" strokeWidth="2.4" />
        <path d="M202 215 358 205 350 340 210 352Z" fill="#b7bad0" stroke="#333" strokeWidth="2.4" />
        <ellipse cx="262" cy="166" rx="18" ry="5" fill="#7c7c90" />
        <text x="250" y="300" fontFamily="Liberation Sans, sans-serif" fontWeight="700" fontSize="40" fill="#111" transform="rotate(-5 285 285)" textLength="76" lengthAdjust="spacingAndGlyphs" stroke="#111">LEFT</text>
        <path d="M372 358 327 298" stroke="#ff0000" strokeWidth="5" />
        <path d="M327 298 350 326" stroke="#f0b0b0" strokeWidth="3" />
        <path d="M372 358 390 232" stroke="#0000e0" strokeWidth="5" />
        <path d="M372 360 238 380" stroke="#00e000" strokeWidth="5" />
        <path d="M360 372 390 380 388 420 360 428 332 420 331 382Z" fill="#84859f" />
        <path d="M402 392H438L420 408Z" fill="#3d3e66" />
    </g>
);

const Axis = () => (
    <g fontFamily="Liberation Sans, sans-serif" fontSize="11" fontWeight="700" fill="#111">
        <path d="M1881 902V880" stroke="#1a1a90" strokeWidth="1.6" />
        <path d="M1881 874 1886 884H1876Z" fill="#1a1a90" />
        <path d="M1881 902 1876 897" stroke="#8c1a1a" strokeWidth="4" />
        <path d="M1881 902H1855" stroke="#1f7d1f" strokeWidth="1.6" />
        <path d="M1858 899 1864 902 1858 905Z" fill="#1f7d1f" />
        <text x="1882" y="874">Z</text>
        <text x="1877" y="894">X</text>
        <text x="1855" y="902">Y</text>
    </g>
);

const Arrow = ({ up }) => (
    <svg width="13" height="9" viewBox="0 0 13 9"><path d={up ? 'M1 8 6.5 2 12 8' : 'M1 1 6.5 7 12 1'} fill="none" stroke="#555" strokeWidth="2" /></svg>
);

const Close = ({ on }) => (
    <svg width="20" height="22" viewBox="0 0 20 22" style={{ flex: 'none' }}>
        <rect x="1" y="1" width="18" height="20" fill={on ? '#e27d55' : '#bcbcbc'} stroke={on ? '#d9402c' : '#a0a0a0'} strokeWidth="2" />
        <path d="M6 7 14 15M14 7 6 15" stroke="#fff" strokeWidth="3" />
    </svg>
);

const TREE = [
    { level: 1, twist: 'right', icon: <TreeCompound />, label: 'base du pot' },
    { level: 1, twist: 'right', icon: <TreeBox3d />, label: 'Grille&Pieds' },
    { level: 1, twist: 'down', icon: <TreeCompound />, label: 'Couvercle' },
    { level: 2, icon: <TreeCyl badge />, label: 'Tube003', muted: true },
    { level: 2, icon: <TreeCyl />, label: 'Cylindre014', muted: true },
    { level: 1, twist: 'down', icon: <TreeCompound />, label: 'Réservoir001' },
    { level: 2, twist: 'down', icon: <TreeCompound pale />, label: 'Cut013', muted: true, selected: true },
    { level: 3, twist: 'right', icon: <TreeCompound grey />, label: 'Réservoir', muted: true },
    { level: 3, icon: <TreeCyl badge />, label: 'Tube002', muted: true },
    { level: 2, icon: <TreeCyl />, label: 'Cylindre015', muted: true },
];

const App = () => {
    return (
        <Page>
            <GlobalStyle />
            <Gradients />
            <TitleBar>
                <LoadBar />
                <Logo w={27} h={27} />
                <TitleText>FreeCAD 0.20.2</TitleText>
                <WindowButtons>
                    <WindowButton>
                        <svg width="16" height="2"><path d="M0 1H16" stroke="#999" /></svg>
                    </WindowButton>
                    <WindowButton>
                        <svg width="16" height="18" viewBox="0 0 16 18"><path d="M1.5 5.5H11.5V16.5H1.5ZM4.5 5V1.5H14.5V13H12" fill="none" stroke="#999" /></svg>
                    </WindowButton>
                    <WindowButton>
                        <svg width="18" height="18" viewBox="0 0 18 18"><path d="M1 1 17 17M17 1 1 17" stroke="#999" /></svg>
                    </WindowButton>
                </WindowButtons>
            </TitleBar>

            <MenuBar>
                <span>Fichier</span>
                <span>Édition</span>
                <span>Affichage</span>
                <span>Outils</span>
                <span>Macro</span>
                <span>Fenêtre</span>
                <span>Aide</span>
            </MenuBar>

            <ToolRow $h={50} $pb={2}>
                <ToolGroup $w={674}>
                    <Grip $gap={8} />
                    <ToolButton><IconNew /></ToolButton>
                    <ToolButton><IconOpen /></ToolButton>
                    <ToolButton><IconSave /></ToolButton>
                    <ToolButton><IconSaveAs /></ToolButton>
                    <ToolSep />
                    <ToolButton><IconCut /></ToolButton>
                    <ToolButton><IconCopy /></ToolButton>
                    <ToolButton><IconPaste /></ToolButton>
                    <ToolSep />
                    <ToolButton $w={44}><IconTurn /></ToolButton>
                    <DropArrow />
                    <ToolButton $w={50}><IconTurn flip off /></ToolButton>
                    <DropArrow $off $w={12} />
                    <ToolSep />
                    <ToolButton $w={52}><IconCheck /></ToolButton>
                    <DropArrow $w={14} />
                    <ToolSep $gap={2} />
                    <ToolButton $w={56}><IconRefresh /></ToolButton>
                    <ToolSep $gap={0} />
                    <ToolButton $w={52}><IconWhat /></ToolButton>
                </ToolGroup>
                <ToolGroup $w={234}>
                    <Grip $gap={7} />
                    <Combo>
                        <IconArrow w={22} h={24} />
                        <span>Start</span>
                        <ComboChevron>
                            <svg width="12" height="8" viewBox="0 0 12 8"><path d="M1 1 6 7 11 1" fill="none" stroke="#666" /></svg>
                        </ComboChevron>
                    </Combo>
                </ToolGroup>
                <ToolGroup>
                    <Grip $gap={9} />
                    <ToolButton><IconRecord /></ToolButton>
                    <ToolButton><IconStop /></ToolButton>
                    <ToolButton><IconMacro /></ToolButton>
                    <ToolButton><IconPlay /></ToolButton>
                </ToolGroup>
            </ToolRow>

            <ToolRow $h={51}>
                <ToolGroup $w={860}>
                    <Grip $gap={7} />
                    <ToolButton><IconFitAll /></ToolButton>
                    <ToolButton><IconFitSel /></ToolButton>
                    <ToolButton><IconDrawStyle /></ToolButton>
                    <DropArrow $w={18} />
                    <ToolButton $w={47}><IconBox /></ToolButton>
                    <ToolSep $gap={3} />
                    <ToolButton $w={51}><IconArrow left fill="url(#teal)" line="#0c5d66" /></ToolButton>
                    <ToolButton $w={40}><IconArrow fill="url(#grey)" line="#9a9a9a" /></ToolButton>
                    <ToolButton $w={52}><IconSyncCube /></ToolButton>
                    <DropArrow $w={16} />
                    <ToolButton $on $ml={10.5} $w={45}><IconSyncView /></ToolButton>
                    <DropArrow $on $w={19} />
                    <ToolButton $w={46}><IconIso /></ToolButton>
                    <ToolSep $gap={3} />
                    <ToolButton $w={48}><IconCube face="front" /></ToolButton>
                    <ToolButton><IconCube face="top" /></ToolButton>
                    <ToolButton><IconCube face="right" /></ToolButton>
                    <ToolSep $gap={3} />
                    <ToolButton $w={51}><IconCube face="rear" /></ToolButton>
                    <ToolButton $w={42}><IconCube face="bottom" /></ToolButton>
                    <ToolButton $w={52}><IconCube face="left" /></ToolButton>
                    <ToolSep $gap={0} />
                    <ToolButton $w={52}><IconRuler /></ToolButton>
                </ToolGroup>
                <ToolGroup $w={222}>
                    <Grip $gap={8} />
                    <ToolButton><IconPart /></ToolButton>
                    <ToolButton><IconFolder /></ToolButton>
                    <ToolButton><IconLink /></ToolButton>
                    <ToolButton><IconLink2 /></ToolButton>
                    <DropArrow $w={18} />
                </ToolGroup>
                <ToolGroup>
                    <Grip $gap={8} />
                    <ToolButton $w={46}><IconWeb /></ToolButton>
                    <ToolSep $gap={4} />
                    <ToolButton $w={48}><IconGlobe /></ToolButton>
                    <ToolButton><IconArrow /></ToolButton>
                    <ToolSep $gap={2} />
                    <ToolButton $w={53}><IconArrow left fill="url(#grey)" line="#8a8a8a" /></ToolButton>
                    <ToolButton $w={40}><IconArrow fill="url(#grey)" line="#8a8a8a" /></ToolButton>
                    <ToolButton $w={53}><IconRefresh /></ToolButton>
                    <ToolButton $w={41}><IconStopOct /></ToolButton>
                    <ToolSep $gap={5} />
                    <ToolButton $w={46}><IconPlus /></ToolButton>
                    <ToolButton $w={46}><IconMinus /></ToolButton>
                </ToolGroup>
            </ToolRow>

            <Main>
                <Dock>
                    <DockTitle>
                        Vue combinée
                        <DockButtons>
                            <svg width="13" height="14" viewBox="0 0 15 15"><path d="M5 1H14V9H11V5H5ZM1 5.5H10.5V14H1Z" fill="none" stroke="#333" strokeWidth="2" /></svg>
                            <svg width="14" height="14" viewBox="0 0 14 14"><path d="M2 2 12 12M12 2 2 12" stroke="#444" strokeWidth="2.4" /></svg>
                        </DockButtons>
                    </DockTitle>
                    <TopTabs>
                        <TopTab $on $w={91}>Modèle</TopTab>
                        <TopTab $w={83}>Tâches</TopTab>
                    </TopTabs>
                    <TabPane>
                        <TreeBox>
                            <TreeHeader>
                                <TreeHeaderCell $w={235} $pad={6} $ls={0.05}>Étiquettes &amp; attributs</TreeHeaderCell>
                                <TreeHeaderCell $w={150} $pad={6}>Description</TreeHeaderCell>
                            </TreeHeader>
                            <TreeRoot>Application</TreeRoot>
                            <TreeRow $level={0}>
                                <Twisty><Down /></Twisty>
                                <TreeBody $bold><TreeDoc />PotPlante</TreeBody>
                            </TreeRow>
                            {TREE.map(row => (
                                <TreeRow key={row.label} $level={row.level}>
                                    <Twisty>
                                        {row.twist === 'down' && <Down />}
                                        {row.twist === 'right' && <Right />}
                                    </Twisty>
                                    <TreeBody $muted={row.muted} $selected={row.selected}>
                                        {row.icon}
                                        {row.label}
                                    </TreeBody>
                                </TreeRow>
                            ))}
                        </TreeBox>
                        <PropBox>
                            <PropFrame>
                                <PropTable>
                                    <PropHeader>
                                        <PropHeaderCell $w={150} $pad={5} $border>Propriété</PropHeaderCell>
                                        <PropHeaderCell $w={300} $pad={5}>Valeur</PropHeaderCell>
                                    </PropHeader>
                                    <PropGroup>Base</PropGroup>
                                    <PropRow>
                                        <PropExpander />
                                        <PropName $alt>Base</PropName>
                                        <PropValue $alt>Cut012 (Réservoir)</PropValue>
                                    </PropRow>
                                    <PropRow $h={33}>
                                        <PropExpander />
                                        <PropName>Tool</PropName>
                                        <PropValue>Tube002</PropValue>
                                    </PropRow>
                                    <PropRow>
                                        <PropExpander><Down /></PropExpander>
                                        <PropName $alt>Placement</PropName>
                                        <PropValue $alt>{'[(0,00 0,00 1,00); 0,00 °; (0,00 mm  0,00 mm  -8,00 mm)]'}</PropValue>
                                    </PropRow>
                                    <PropRow>
                                        <PropExpander />
                                        <PropName $indent={34}>Angle</PropName>
                                        <PropValue>0,00 °</PropValue>
                                    </PropRow>
                                </PropTable>
                                <ScrollBar>
                                    <ScrollThumb />
                                    <ScrollArrow><Arrow up /></ScrollArrow>
                                    <ScrollArrow><Arrow /></ScrollArrow>
                                </ScrollBar>
                            </PropFrame>
                        </PropBox>
                        <BottomTabs>
                            <BottomTab $w={59}>Vue</BottomTab>
                            <BottomTab $on $w={103}>Données</BottomTab>
                        </BottomTabs>
                    </TabPane>
                </Dock>

                <Viewport>
                    <Canvas>
                        <Scene width="1242" height="772" viewBox="678 169 1242 772">
                            <Flat />
                            <Pot />
                            <NavCube />
                            <Axis />
                        </Scene>
                    </Canvas>
                    <DocTabs>
                        <DocTab $w={232} $pad={13}>
                            <Logo />
                            <span>Page de démarrage</span>
                            <Close />
                        </DocTab>
                        <DocTab $on $w={202} $pad={20}>
                            <Logo />
                            <span>PotPlante : 1*</span>
                            <Close on />
                        </DocTab>
                    </DocTabs>
                </Viewport>
            </Main>

            <StatusBar>
                Valid, nom interne : Cylinder015
                <StatusRight>
                    <TouchPad>
                        <svg width="20" height="20" viewBox="0 0 20 20"><rect x="1" y="1" width="18" height="18" rx="3" fill="none" stroke="#444" strokeWidth="2" /><path d="M1 13H19M10 13V19" stroke="#444" strokeWidth="2" /></svg>
                        Touchpad
                        <TouchArrow />
                    </TouchPad>
                    <Dimensions>32,36 mm x 20,09 mm</Dimensions>
                </StatusRight>
            </StatusBar>

            <TaskBar>
                <StartBtn>
                    <svg width="25" height="25" viewBox="0 0 25 25"><path d="M0 3.5 10.5 2V12H0ZM12 1.8 25 0V12H12ZM0 13.5H10.5V23L0 21.5ZM12 13.5H25V25L12 23.2Z" fill="#fff" /></svg>
                </StartBtn>
                <TaskItem $w={61} $mr={14}>
                    <svg width="32" height="32" viewBox="0 0 32 32">
                        <path d="M1 3H13L16 7H31V30H1Z" fill="#f3c14a" />
                        <path d="M1 9H31V30H1Z" fill="#fbdc72" />
                        <path d="M9 30V22H23V30H20V25H12V30Z" fill="#1d90e0" />
                        <rect x="12" y="25" width="8" height="5" fill="#f5b82e" />
                    </svg>
                </TaskItem>
                <TaskItem $w={61} $mr={8}>
                    <Logo w={36} h={36} />
                </TaskItem>
                <TaskItem $on $w={73}>
                    <svg width="32" height="44" viewBox="0 0 32 44">
                        <path d="M10 3C3 8 2 24 12 31M20 2C29 9 28 24 17 31" fill="none" stroke="#c93a12" strokeWidth="4" />
                        <path d="M13 2 16 30 19 2Z" fill="#e2e2e2" />
                        <path d="M19 10 24 14 17 28Z" fill="#9a9a9a" />
                        <circle cx="9" cy="33" r="4.5" fill="none" stroke="#1d8ae0" strokeWidth="3" />
                        <circle cx="20" cy="37" r="4.5" fill="none" stroke="#1d8ae0" strokeWidth="3" />
                    </svg>
                </TaskItem>
                <Tray>
                    <TrayIcon $w={44}>
                        <svg width="36" height="36" viewBox="0 0 36 36">
                            <circle cx="15" cy="16" r="15" fill="#fff" />
                            <circle cx="15" cy="16" r="12.5" fill="#17a1dc" />
                            <text x="15" y="23" textAnchor="middle" fontFamily="Liberation Sans, sans-serif" fontSize="21" fontWeight="700" fill="#fff">?</text>
                            <circle cx="26" cy="27" r="7" fill="#f0a41e" />
                            <text x="26" y="32" textAnchor="middle" fontFamily="Liberation Sans, sans-serif" fontSize="12" fontWeight="700" fill="#fff">i</text>
                        </svg>
                    </TrayIcon>
                    <TrayIcon $w={36}>
                        <svg width="20" height="12" viewBox="0 0 20 12"><path d="M1 11 10 2 19 11" fill="none" stroke="#e0e0e0" strokeWidth="1.4" /></svg>
                    </TrayIcon>
                    <TrayIcon>
                        <svg width="18" height="24" viewBox="0 0 18 24" fill="none" stroke="#e0e0e0" strokeWidth="1.2"><rect x="1" y="6" width="10" height="12" rx="2" /><path d="M11 10 17 7V17L11 14M3 2C5 1 7 1 9 2M3 22C5 23 7 23 9 22" /></svg>
                    </TrayIcon>
                    <TrayIcon>
                        <svg width="26" height="24" viewBox="0 0 26 24" fill="none" stroke="#e8e8e8" strokeWidth="1.2"><path d="M1 3 23 0V19L1 21Z" /><path d="M7 12C7 8 12 7 14 9M15 11C15 15 10 16 8 14" /><circle cx="19" cy="18" r="5.5" fill="#f59a0a" stroke="none" /></svg>
                    </TrayIcon>
                    <TrayIcon>
                        <svg width="24" height="12" viewBox="0 0 24 12" fill="none" stroke="#eee" strokeWidth="1.2"><rect x="1" y="1" width="20" height="10" /><rect x="3" y="3" width="13" height="6" fill="#eee" stroke="none" /><path d="M22.5 4V8" /></svg>
                    </TrayIcon>
                    <TrayIcon>
                        <svg width="26" height="26" viewBox="0 0 26 26" fill="none" stroke="#e8e8e8" strokeWidth="1.2"><circle cx="12" cy="12" r="11" /><ellipse cx="12" cy="12" rx="5" ry="11" /><path d="M1 12H23M2.5 6.5H21.5M2.5 17.5H16" /><circle cx="19" cy="19" r="5" fill="#1b1b1b" /><path d="M15.5 15.5 22.5 22.5" /></svg>
                    </TrayIcon>
                    <TrayIcon>
                        <svg width="24" height="22" viewBox="0 0 24 22" fill="none" stroke="#d8d8d8" strokeWidth="1.2"><path d="M1 7H5L11 2V20L5 15H1Z" /><path d="M14 8C15 10 15 12 14 14" /><path d="M17 6C19 9 19 13 17 16M20 3.5C23 8 23 14 20 18.5" stroke="#888" /></svg>
                    </TrayIcon>
                    <Clock>
                        11:25<br />24/02/2023
                    </Clock>
                    <Note>
                        <svg width="26" height="28" viewBox="0 0 26 28"><path d="M0 0H24V20H12L7 26V20H0Z" fill="#f4f4f4" /><path d="M4 5H20M4 9H20M4 13H20" stroke="#555" strokeWidth="1.2" /></svg>
                        <NoteBadge>1</NoteBadge>
                    </Note>
                </Tray>
                <DesktopEdge />
            </TaskBar>
        </Page>
    );
};

export default App;
